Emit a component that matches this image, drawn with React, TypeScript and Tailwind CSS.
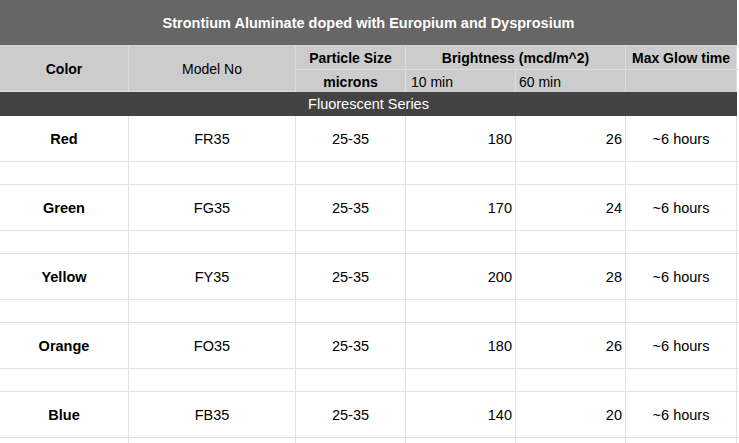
const rows = [
  { color: "Red", model: "FR35", size: "25-35", b10: 180, b60: 26, glow: "~6 hours" },
  { color: "Green", model: "FG35", size: "25-35", b10: 170, b60: 24, glow: "~6 hours" },
  { color: "Yellow", model: "FY35", size: "25-35", b10: 200, b60: 28, glow: "~6 hours" },
  { color: "Orange", model: "FO35", size: "25-35", b10: 180, b60: 26, glow: "~6 hours" },
  { color: "Blue", model: "FB35", size: "25-35", b10: 140, b60: 20, glow: "~6 hours" },
];

const cols = "grid grid-cols-[129px_167px_110px_110px_110px_111px_2px]";
const cell = "border-r border-b border-[#e2e2e2] flex items-center pt-[2px]";
const head = "border-r border-b border-[#dcdcdc] bg-[#cccccc] flex items-center pt-[2px]";

const App = () => {
  return (
    <div className="w-[739px] h-[443px] overflow-hidden bg-white text-[14px] text-black font-['Liberation_Sans',Arial,sans-serif]">
      {/* Title */}
      <div className="flex">
        <div className="w-[737px] h-[46px] pt-[3px] bg-[#666666] border-b border-[#d6d6d6] flex items-center justify-center text-white font-bold text-[14.5px]">
          Strontium Aluminate doped with Europium and Dysprosium
        </div>
        <div className="w-[2px] border-b border-[#e2e2e2]" />
      </div>

      {/* Column headers */}
      <div className={`${cols} grid-rows-[24px_22px]`}>
        <div className={`${head} row-span-2 justify-center font-bold`}>Color</div>
        <div className={`${head} row-span-2 justify-center`}>Model No</div>
        <div className={`${head} justify-center font-bold`}>Particle Size</div>
        <div className={`${head} col-span-2 justify-center font-bold`}>Brightness (mcd/m^2)</div>
        <div className={`${head} justify-center font-bold`}>Max Glow time</div>
        <div className="border-b border-[#e2e2e2]" />
        <div className="bg-[#cccccc] border-r border-[#dcdcdc] flex items-center pt-[2px] justify-center font-bold">microns</div>
        <div className="bg-[#cccccc] border-r border-[#dcdcdc] flex items-center pt-[2px] pl-[5px]">10 min</div>
        <div className="bg-[#cccccc] border-r border-[#dcdcdc] flex items-center pt-[2px] pl-[3px]">60 min</div>
        <div className="bg-[#cccccc] border-r border-[#dcdcdc]" />
        <div />
      </div>

      {/* Series */}
      <div className="flex">
        <div className="w-[737px] h-[24px] pt-[2px] bg-[#434343] flex items-center justify-center text-white text-[14.5px]">
          Fluorescent Series
        </div>
        <div className="w-[2px]" />
      </div>

      {/* Data */}
      {rows.map((r) => (
        <div key={r.model}>
          <div className={`${cols} h-[46px] text-[14.5px]`}>
            <div className={`${cell} justify-center font-bold`}>{r.color}</div>
            <div className={`${cell} justify-center`}>{r.model}</div>
            <div className={`${cell} justify-center`}>{r.size}</div>
            <div className={`${cell} justify-end pr-[3px]`}>{r.b10}</div>
            <div className={`${cell} justify-end pr-[3px]`}>{r.b60}</div>
            <div className={`${cell} justify-center`}>{r.glow}</div>
            <div className="border-b border-[#e2e2e2]" />
          </div>
          <div className={`${cols} h-[23px]`}>
            <div className={cell} />
            <div className={cell} />
            <div className={cell} />
            <div className={cell} />
            <div className={cell} />
            <div className={cell} />
            <div className="border-b border-[#e2e2e2]" />
          </div>
        </div>
      ))}
    </div>
  );
};

export default App;
